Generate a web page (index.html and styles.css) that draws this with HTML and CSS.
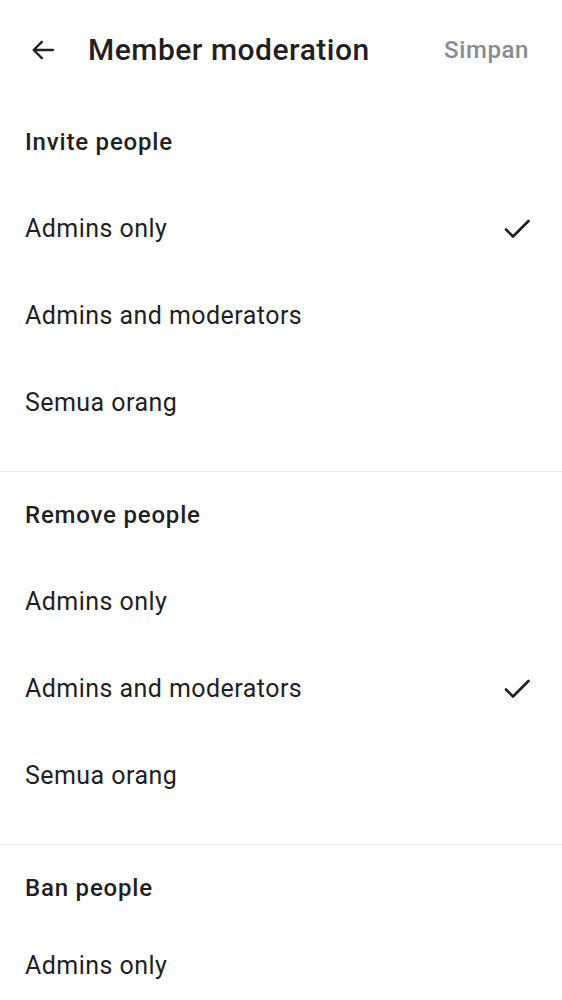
FILE: index.html
```html
<!DOCTYPE html>
<html>
<head>
<meta charset="utf-8">
<link rel="stylesheet" href="styles.css">
</head>
<body>
<header class="topbar">
  <button class="back" aria-label="Back">
    <svg width="28" height="28" viewBox="0 0 24 24"><path d="M20.5 12H4.5M11 5l-7 7 7 7" fill="none" stroke="#1f1f24" stroke-width="2" stroke-linecap="round" stroke-linejoin="round"/></svg>
  </button>
  <h1 class="title">Member moderation</h1>
  <span class="save">Simpan</span>
</header>

<section class="group">
  <h2 class="group-title">Invite people</h2>
  <div class="option">Admins only<svg class="check" width="28" height="28" viewBox="0 0 28 28"><path d="M3 14.5L10 21.5L25.5 6" fill="none" stroke="#1f1f24" stroke-width="2.6" stroke-linecap="round" stroke-linejoin="round"/></svg></div>
  <div class="option">Admins and moderators</div>
  <div class="option">Semua orang</div>
</section>

<section class="group">
  <h2 class="group-title">Remove people</h2>
  <div class="option">Admins only</div>
  <div class="option">Admins and moderators<svg class="check" width="28" height="28" viewBox="0 0 28 28"><path d="M3 14.5L10 21.5L25.5 6" fill="none" stroke="#1f1f24" stroke-width="2.6" stroke-linecap="round" stroke-linejoin="round"/></svg></div>
  <div class="option">Semua orang</div>
</section>

<section class="group group-last">
  <h2 class="group-title">Ban people</h2>
  <div class="option">Admins only</div>
</section>
</body>
</html>
```

FILE: styles.css
```css
* { box-sizing: border-box; }
html, body { margin: 0; padding: 0; background: #fff; }
body {
  font-family: Roboto, "Noto Sans", sans-serif;
  color: #1f1f24;
  width: 562px;
  height: 1000px;
  overflow: hidden;
}
.topbar {
  height: 99px;
  display: flex;
  align-items: center;
  padding: 0 33px 0 29px;
}
.back {
  border: 0;
  background: none;
  padding: 0;
  width: 28px;
  height: 28px;
  display: flex;
  margin-right: 31px;
}
.title {
  margin: 0;
  font-size: 30px;
  font-weight: 500;
  flex: 1;
  letter-spacing: 0.5px;
}
.save {
  font-size: 24px;
  font-weight: 500;
  color: #868c96;
  letter-spacing: 0.6px;
}
.group {
  border-bottom: 1px solid #e9ebee;
  padding-bottom: 25px;
}
.group-last { border-bottom: 0; padding-bottom: 0; }
.group-title {
  margin: 0;
  height: 86px;
  display: flex;
  align-items: center;
  padding: 0 25px;
  font-size: 24px;
  font-weight: 500;
  letter-spacing: 0.8px;
}
.group-last .group-title {
  height: 76.5px;
  padding-top: 9.5px;
}
.option {
  height: 87px;
  display: flex;
  align-items: center;
  justify-content: space-between;
  padding: 0 31px 0 25px;
  font-size: 25px;
  letter-spacing: 0.45px;
}
.check { display: block; }
```
